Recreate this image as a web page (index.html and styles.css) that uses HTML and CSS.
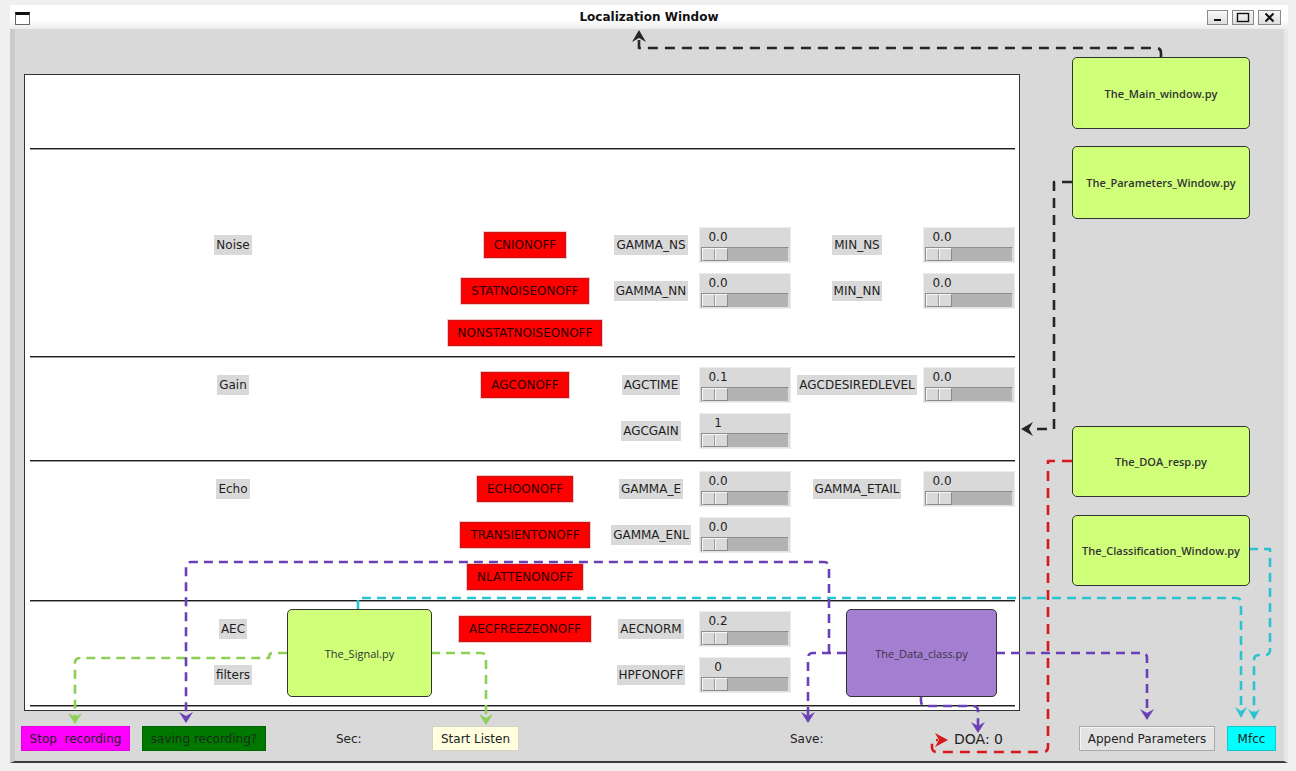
FILE: index.html
```html
<!DOCTYPE html>
<html lang="en">
<head>
<meta charset="utf-8">
<title>Localization Window</title>
<link rel="stylesheet" href="styles.css">
</head>
<body>
<div class="screen">
  <div class="window">
    <div class="titlebar">
      <div class="tb-left"><span class="ticon"></span></div>
      <div class="title">Localization Window</div>
      <div class="tb-right">
        <span class="wbtn"><svg width="19" height="13" viewBox="0 0 19 13"><rect x="6" y="8" width="7" height="2" fill="#111"/></svg></span>
        <span class="wbtn"><svg width="20" height="13" viewBox="0 0 20 13"><rect x="4.5" y="2.5" width="11" height="8" fill="none" stroke="#111" stroke-width="1.4"/></svg></span>
        <span class="wbtn"><svg width="21" height="13" viewBox="0 0 21 13"><path d="M6.5 2.5 L14.5 10.5 M14.5 2.5 L6.5 10.5" stroke="#111" stroke-width="2"/></svg></span>
      </div>
    </div>
    <div class="wbody">
      <div class="panel">
        <div class="top-space"></div>
        <div class="sep"></div>

        <div class="section s-noise">
          <span class="lbl c1 r1">Noise</span>
          <span class="rbtn c3 r1">CNIONOFF</span>
          <span class="lbl c4 r1">GAMMA_NS</span>
          <div class="scale c5 r1"><div class="sval">0.0</div><div class="trough"><span class="handle"></span></div></div>
          <span class="lbl c6 r1">MIN_NS</span>
          <div class="scale c7 r1"><div class="sval">0.0</div><div class="trough"><span class="handle"></span></div></div>

          <span class="rbtn c3 r2">STATNOISEONOFF</span>
          <span class="lbl c4 r2">GAMMA_NN</span>
          <div class="scale c5 r2"><div class="sval">0.0</div><div class="trough"><span class="handle"></span></div></div>
          <span class="lbl c6 r2">MIN_NN</span>
          <div class="scale c7 r2"><div class="sval">0.0</div><div class="trough"><span class="handle"></span></div></div>

          <span class="rbtn c3 r3">NONSTATNOISEONOFF</span>
        </div>
        <div class="sep"></div>

        <div class="section s-gain">
          <span class="lbl c1 r1">Gain</span>
          <span class="rbtn c3 r1">AGCONOFF</span>
          <span class="lbl c4 r1">AGCTIME</span>
          <div class="scale c5 r1"><div class="sval">0.1</div><div class="trough"><span class="handle"></span></div></div>
          <span class="lbl c6 r1">AGCDESIREDLEVEL</span>
          <div class="scale c7 r1"><div class="sval">0.0</div><div class="trough"><span class="handle"></span></div></div>

          <span class="lbl c4 r2">AGCGAIN</span>
          <div class="scale c5 r2"><div class="sval">1</div><div class="trough"><span class="handle"></span></div></div>
        </div>
        <div class="sep"></div>

        <div class="section s-echo">
          <span class="lbl c1 r1">Echo</span>
          <span class="rbtn c3 r1">ECHOONOFF</span>
          <span class="lbl c4 r1">GAMMA_E</span>
          <div class="scale c5 r1"><div class="sval">0.0</div><div class="trough"><span class="handle"></span></div></div>
          <span class="lbl c6 r1">GAMMA_ETAIL</span>
          <div class="scale c7 r1"><div class="sval">0.0</div><div class="trough"><span class="handle"></span></div></div>

          <span class="rbtn c3 r2">TRANSIENTONOFF</span>
          <span class="lbl c4 r2">GAMMA_ENL</span>
          <div class="scale c5 r2"><div class="sval">0.0</div><div class="trough"><span class="handle"></span></div></div>

          <span class="rbtn c3 r3">NLATTENONOFF</span>
        </div>
        <div class="sep"></div>

        <div class="section s-aec">
          <span class="lbl c1 r1">AEC</span>
          <span class="rbtn c3 r1">AECFREEZEONOFF</span>
          <span class="lbl c4 r1">AECNORM</span>
          <div class="scale c5 r1"><div class="sval">0.2</div><div class="trough"><span class="handle"></span></div></div>

          <span class="lbl c1 r2">filters</span>
          <span class="lbl c4 r2">HPFONOFF</span>
          <div class="scale c5 r2"><div class="sval">0</div><div class="trough"><span class="handle"></span></div></div>
        </div>
        <div class="sep"></div>
      </div>

      <div class="bottombar">
        <span class="bb bb-stop">Stop&nbsp; recording</span>
        <span class="bb bb-saving">saving recording?</span>
        <span class="bt bt-sec">Sec:</span>
        <span class="bb bb-start">Start Listen</span>
        <span class="bt bt-save">Save:</span>
        <span class="bt bt-doa">DOA: 0</span>
        <span class="bb bb-append">Append Parameters</span>
        <span class="bb bb-mfcc">Mfcc</span>
      </div>
    </div>
  </div>

  <div class="diagram">
    <svg class="wires" width="1296" height="771" viewBox="0 0 1296 771">
      <g fill="none" stroke-width="2.6" stroke-linejoin="round">
        <g stroke="#262626" stroke-dasharray="10 7">
          <path d="M1161,57 L1161,53 Q1161,48 1156,48 L639,48 L639,40"/>
          <path d="M1072,182 L1054,182 L1054,429 L1030,429"/>
        </g>
        <path stroke="#d7191c" stroke-dasharray="10 7" d="M1072,461 L1048,461 L1048,747 Q1048,752 1043,752 L937,752 Q932,752 932,747 L932,741 L938,740"/>
        <g stroke="#2bc3d2" stroke-dasharray="9 6">
          <path d="M358,609 L358,598 L1236,598 Q1241,598 1241,603 L1241,711"/>
          <path d="M1249,549 L1270,549 L1270,650 Q1270,655 1265,655 L1259,655 Q1254,655 1254,660 L1254,713"/>
        </g>
        <g stroke="#8ccf55" stroke-dasharray="9 6">
          <path d="M287,653 L273,653 Q269,653 269,657 L269,658 L80,658 Q75,658 75,663 L75,717"/>
          <path d="M431,653 L481,653 Q486,653 486,658 L486,718"/>
        </g>
        <g stroke="#6b3fb7" stroke-dasharray="9 6">
          <path d="M846,653 L813,653 Q808,653 808,658 L808,716"/>
          <path d="M829,653 L829,567 Q829,562 824,562 L191,562 Q186,562 186,567 L186,716"/>
          <path d="M996,653 L1142,653 Q1147,653 1147,658 L1147,713"/>
          <path d="M921,696 L921,701 Q921,706 926,706 L973,706 Q978,706 978,711 L978,726"/>
        </g>
      </g>
      <g stroke="none">
        <polygon fill="#262626" points="632,42 639,30 646,42 639,38"/>
        <polygon fill="#262626" points="1033,422 1021,429 1033,436 1029,429"/>
        <polygon fill="#d7191c" points="935,733 948,740 935,747 939,740"/>
        <polygon fill="#2bc3d2" points="1235,707 1241,718 1247,707 1241,711"/>
        <polygon fill="#2bc3d2" points="1248,709 1254,720 1260,709 1254,713"/>
        <polygon fill="#8ccf55" points="68,713 75,724 82,713 75,717"/>
        <polygon fill="#8ccf55" points="479,714 486,725 493,714 486,718"/>
        <polygon fill="#6b3fb7" points="179,712 186,723 193,712 186,716"/>
        <polygon fill="#6b3fb7" points="801,712 808,723 815,712 808,716"/>
        <polygon fill="#6b3fb7" points="1140,709 1147,720 1154,709 1147,713"/>
        <polygon fill="#6b3fb7" points="971,722 978,733 985,722 978,726"/>
      </g>
    </svg>
    <div class="node green n-main">The_Main_window.py</div>
    <div class="node green n-params">The_Parameters_Window.py</div>
    <div class="node green n-doa">The_DOA_resp.py</div>
    <div class="node green n-class">The_Classification_Window.py</div>
    <div class="node green n-signal">The_Signal.py</div>
    <div class="node purple n-data">The_Data_class.py</div>
  </div>
</div>
</body>
</html>
```

FILE: styles.css
```css
* { box-sizing: border-box; }

html, body {
  margin: 0;
  padding: 0;
  background: #f0f0f0;
}

body {
  font-family: "DejaVu Sans", "Liberation Sans", sans-serif;
  font-size: 12px;
  color: #222;
}

.screen {
  position: relative;
  width: 1296px;
  height: 771px;
  overflow: hidden;
}

.window {
  margin: 5px 0 0 10px;
  width: 1278px;
}

/* ---------- title bar ---------- */
.titlebar {
  height: 24px;
  display: grid;
  grid-template-columns: 1fr auto 1fr;
  align-items: center;
  background: linear-gradient(#ffffff 0%, #ffffff 60%, #ececec 100%);
}

.tb-left {
  display: flex;
  align-items: center;
  padding-left: 5px;
}

.ticon {
  width: 15px;
  height: 13px;
  border: 1px solid #666;
  border-top: 3px solid #111;
  background: #fff;
  margin-top: 2px;
}

.title {
  font-weight: bold;
  font-size: 12px;
  color: #111;
  margin-top: -1px;
}

.tb-right {
  display: flex;
  justify-content: flex-end;
  gap: 4px;
  padding-right: 7px;
  margin-top: 1px;
}

.wbtn {
  width: 21px;
  height: 15px;
  border: 1px solid #8a8a8a;
  background: linear-gradient(#f8f8f8, #dedede);
  display: flex;
  align-items: center;
  justify-content: center;
}

.wbtn:nth-child(2) { width: 22px; }
.wbtn:nth-child(3) { width: 23px; }

/* ---------- window body ---------- */
.wbody {
  height: 734px;
  background: #d9d9d9;
  border-left: 5px solid #cbcbcb;
  border-right: 4px solid #e8e8e8;
  border-bottom: 2px solid #3c3c3c;
  padding-top: 45px;
}

.panel {
  margin-left: 9px;
  width: 996px;
  height: 637px;
  background: #fff;
  border: 1px solid #333;
  display: flex;
  flex-direction: column;
}

.top-space { height: 73px; flex: none; }

.sep {
  flex: none;
  height: 2px;
  margin: 0 4px 0 5px;
  border-top: 1px solid #1e1e1e;
  border-bottom: 1px solid #9a9a9a;
}

.section {
  flex: none;
  display: grid;
  grid-template-columns: 406px 11px 156px 96px 92px 132px 92px;
  margin-left: 5px;
  align-items: center;
  justify-items: center;
}

.s-noise { height: 206px; padding-top: 72px; grid-template-rows: 46px 46px 38px; align-content: start; }
.s-gain  { height: 102px; padding-top: 4px;  grid-template-rows: 46px 46px; align-content: start; }
.s-echo  { height: 138px; padding-top: 4px;  grid-template-rows: 46px 46px 38px; align-content: start; }
.s-aec   { height: 103px; padding-top: 4px;  grid-template-rows: 46px 46px; align-content: start; }

.c1 { grid-column: 1; }
.c3 { grid-column: 3; }
.c4 { grid-column: 4; }
.c5 { grid-column: 5; }
.c6 { grid-column: 6; }
.c7 { grid-column: 7; }
.r1 { grid-row: 1; }
.r2 { grid-row: 2; }
.r3 { grid-row: 3; }

.lbl {
  background: #d9d9d9;
  padding: 0 2px;
  line-height: 20px;
  height: 20px;
  white-space: nowrap;
  color: #1e1e1e;
}

.rbtn {
  height: 26px;
  line-height: 24px;
  padding: 0 9px;
  background: #ff0000;
  border: 1px solid #c41616;
  box-shadow: 0 0 0 1px #f6caca;
  color: #2a0000;
  white-space: nowrap;
}

/* Tk scale */
.scale {
  width: 92px;
  height: 36px;
  background: #d9d9d9;
  border: 1px solid #ececec;
  justify-self: stretch;
}

.sval {
  width: 36px;
  height: 18px;
  line-height: 18px;
  text-align: center;
  color: #1e1e1e;
}

.trough {
  margin: 1px 1px 0 1px;
  height: 15px;
  background: #b3b3b3;
  border: 1px solid;
  border-color: #8e8e8e #e2e2e2 #e2e2e2 #8e8e8e;
  display: flex;
}

.handle {
  width: 26px;
  height: 13px;
  border: 1px solid;
  border-color: #f7f7f7 #8a8a8a #8a8a8a #f7f7f7;
  background:
    linear-gradient(to right, transparent 11px, #9a9a9a 11px, #9a9a9a 12px, #f7f7f7 12px, #f7f7f7 13px, transparent 13px),
    #d9d9d9;
}

/* ---------- bottom bar ---------- */
.bottombar {
  margin-top: 15px;
  height: 25px;
  display: flex;
  align-items: center;
}

.bb {
  height: 25px;
  display: flex;
  align-items: center;
  justify-content: center;
  white-space: nowrap;
  border: 1px solid transparent;
  flex: none;
}

.bt {
  flex: none;
  white-space: nowrap;
  color: #222;
}

.bb-stop   { margin-left: 6px;  width: 109px; background: #ff00ff; border-color: #e600e6; color: #222; }
.bb-saving { margin-left: 12px; width: 124px; background: #007800; border-color: #006600; color: #1a2c1a; }
.bt-sec    { margin-left: 70px; width: 24px; }
.bb-start  { margin-left: 72px; width: 87px;  background: #ffffe0; border-color: #d4d4c0; color: #222; }
.bt-save   { margin-left: 271px; width: 32px; }
.bt-doa    { margin-left: 132px; width: 50px; font-size: 14px; margin-top: 1px; }
.bb-append { margin-left: 75px; width: 136px; background: #e3e3e3; border-color: #a9a9a9; color: #222; box-shadow: inset 1px 1px 0 #f6f6f6; }
.bb-mfcc   { margin-left: 12px; width: 49px;  background: #00ffff; border-color: #18c6c6; color: #222; }

/* ---------- diagram overlay ---------- */
.diagram {
  position: absolute;
  left: 0;
  top: 0;
  width: 1296px;
  height: 771px;
  pointer-events: none;
}

.wires {
  position: absolute;
  left: 0;
  top: 0;
}

.node {
  position: absolute;
  display: flex;
  align-items: center;
  justify-content: center;
  border: 1px solid #333;
  border-radius: 5px;
  font-family: "Open Sans", "Noto Sans", sans-serif;
  font-size: 11px;
  font-weight: 600;
  color: #333;
  white-space: nowrap;
}

.green  { background: #d0ff7a; }
.purple { background: #a47fd1; font-weight: 500; color: #3a3344; }

.n-main   { left: 1072px; top: 57px;  width: 178px; height: 72px; }
.n-params { left: 1072px; top: 146px; width: 178px; height: 73px; }
.n-doa    { left: 1072px; top: 426px; width: 178px; height: 71px; }
.n-class  { left: 1072px; top: 515px; width: 178px; height: 71px; }
.n-signal { left: 287px;  top: 609px; width: 145px; height: 88px; font-weight: 500; }
.n-data   { left: 846px;  top: 609px; width: 151px; height: 88px; }
```
